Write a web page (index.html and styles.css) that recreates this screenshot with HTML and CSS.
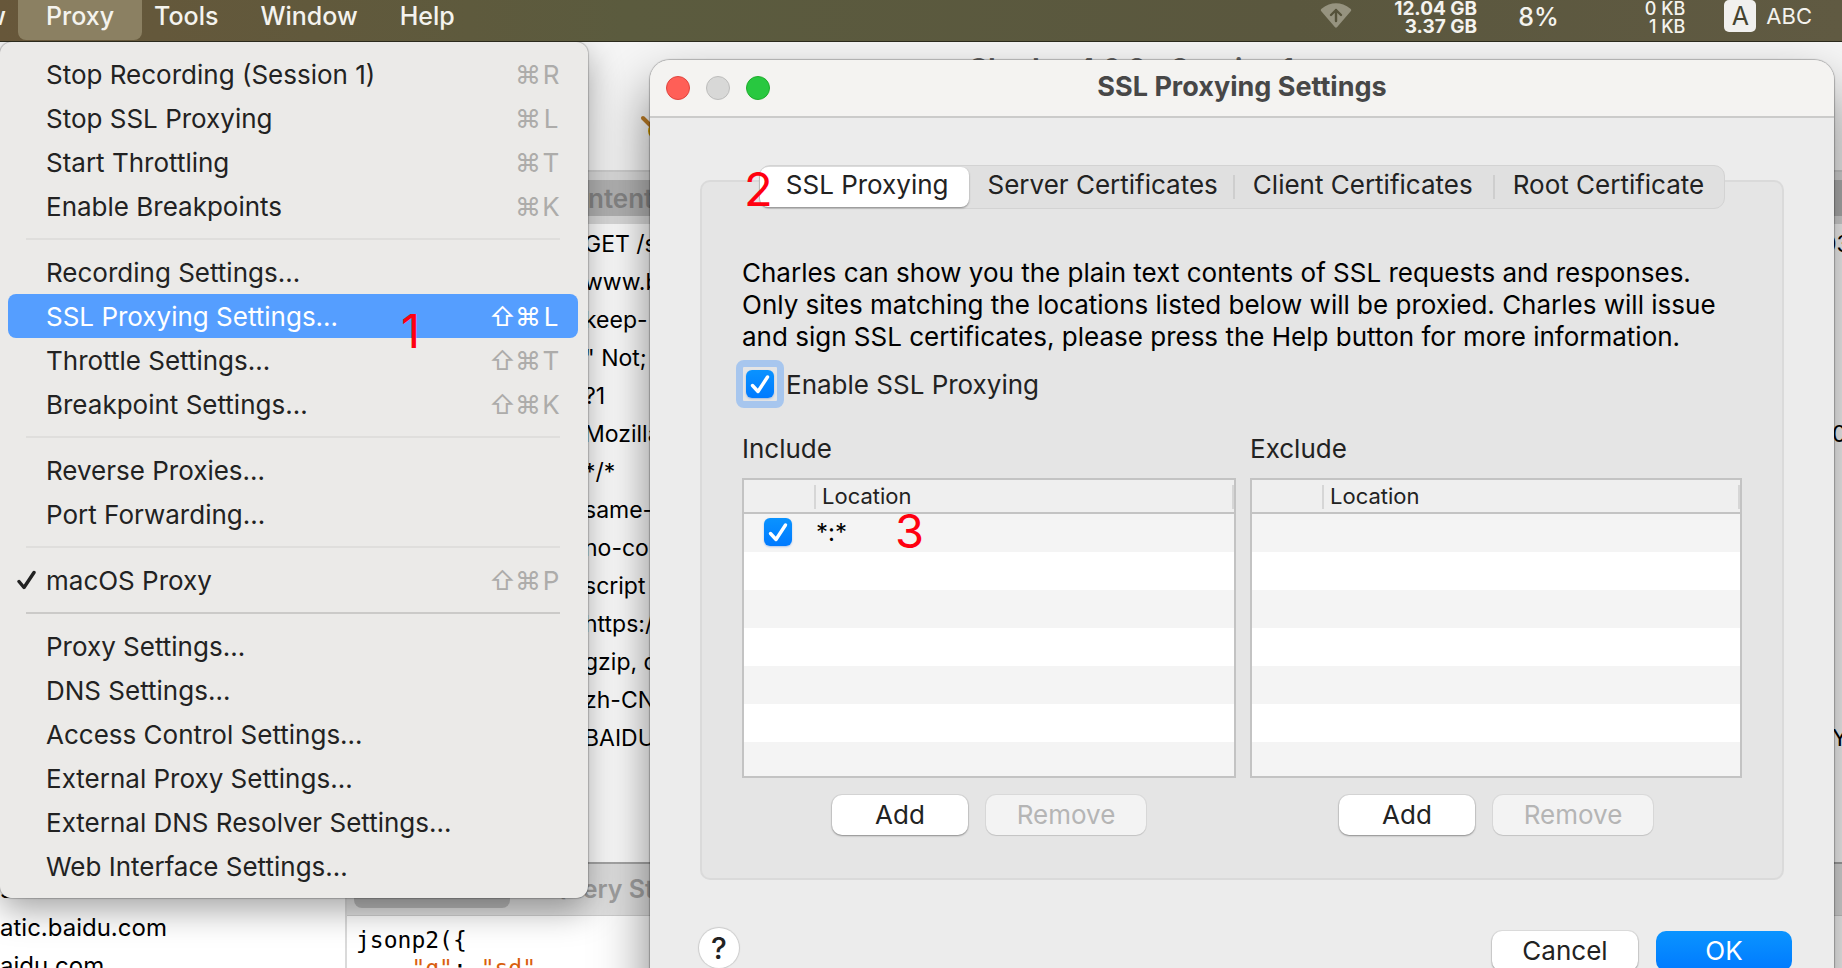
FILE: index.html
```html
<!DOCTYPE html>
<html lang="en">
<head>
<meta charset="utf-8">
<title>SSL Proxying Settings</title>
<link rel="stylesheet" href="styles.css">
</head>
<body>
<header class="menubar">
  <nav class="menubar-menus" aria-label="Application menus">
    <button class="menubar-item menubar-cut" type="button">View</button>
    <button class="menubar-item menubar-open" type="button">Proxy</button>
    <button class="menubar-item" type="button">Tools</button>
    <button class="menubar-item" type="button">Window</button>
    <button class="menubar-item" type="button">Help</button>
  </nav>
  <div class="status">
    <svg class="status-wifi" viewBox="0 0 32 26" aria-hidden="true">
      <path d="M1.500 8.500 Q0 7 1.500 5.700 Q16-5 30.500 5.700 Q32 7 30.500 8.500 L17.200 24 Q16 25.300 14.800 24Z" fill="#96937f"/>
      <path d="M16 18V7M11 12L16 7L21 12" fill="none" stroke="#55523a" stroke-width="2.400" stroke-linecap="round" stroke-linejoin="round"/>
    </svg>
    <div class="status-pair status-bold"><span>12.04 GB</span><span>3.37 GB</span></div>
    <span class="status-cpu">8%</span>
    <div class="status-pair status-net"><span>0 KB</span><span>1 KB</span></div>
    <span class="status-badge">A</span>
    <span class="status-input">ABC</span>
  </div>
</header>

<main class="desktop">
  <section class="app" aria-label="Charles">
    <h1 class="app-title">Charles 4.6.2 - Session 1</h1>
    <div class="app-body">
      <ul class="hosts">
        <li>ss.com</li>
        <li>atic.baidu.com</li>
        <li>aidu.com</li>
      </ul>
      <div class="detail">
        <div class="detail-tabs"><span class="detail-on">Contents</span></div>
        <dl class="fields">
          <div><dt>GET /s</dt><dd class="fields-wide">03</dd></div>
          <div><dt>www.b</dt></div>
          <div><dt>keep-</dt></div>
          <div><dt>" Not;</dt></div>
          <div><dt>?1</dt></div>
          <div><dt>Mozilla</dt><dd>0</dd></div>
          <div><dt>*/*</dt></div>
          <div><dt>same-</dt></div>
          <div><dt>no-co</dt></div>
          <div><dt>script</dt></div>
          <div><dt>https:/</dt></div>
          <div><dt>gzip, d</dt></div>
          <div><dt>zh-CN</dt></div>
          <div><dt>BAIDU</dt><dd>Y</dd></div>
        </dl>
        <div class="lower-tabs"><span class="lower-on"></span><span class="lower-off">Query String</span></div>
        <pre class="code">jsonp2({
    <span class="code-str">"q"</span>: <span class="code-str">"sd"</span></pre>
      </div>
    </div>
    <svg class="app-tool" viewBox="0 0 30 40" aria-hidden="true">
      <circle cx="17" cy="17" r="9" fill="#d7a000"/>
      <path d="M3 4L14 15" stroke="#b97a25" stroke-width="4" stroke-linecap="round"/>
    </svg>
  </section>

  <section class="dialog" role="dialog" aria-labelledby="dialog-title">
    <header class="titlebar">
      <div class="lights">
        <button class="light light-close" type="button" aria-label="Close"></button>
        <button class="light" type="button" aria-label="Minimize" disabled></button>
        <button class="light light-zoom" type="button" aria-label="Zoom"></button>
      </div>
      <h2 class="dialog-title" id="dialog-title">SSL Proxying Settings</h2>
    </header>
    <div class="dialog-body">
      <div class="tabs" role="tablist">
        <button class="tab tab-on" type="button" role="tab" aria-selected="true">SSL Proxying</button>
        <button class="tab tab-after" type="button" role="tab">Server Certificates</button>
        <button class="tab tab-line" type="button" role="tab">Client Certificates</button>
        <button class="tab tab-line" type="button" role="tab">Root Certificate</button>
      </div>
      <div class="panel" role="tabpanel">
        <p class="intro">Charles can show you the plain text contents of SSL requests and responses.<br>Only sites matching the locations listed below will be proxied. Charles will issue<br>and sign SSL certificates, please press the Help button for more information.</p>
        <label class="enable"><span class="focus"><input class="tick" type="checkbox" checked></span>Enable SSL Proxying</label>
        <div class="lists">
          <section class="list">
            <h3 class="list-title">Include</h3>
            <table class="grid">
              <thead><tr><th class="grid-check"></th><th class="grid-location">Location</th></tr></thead>
              <tbody>
                <tr><td class="grid-check"><input class="tick" type="checkbox" aria-label="Enable *:*" checked></td><td class="grid-value">*:*</td></tr>
                <tr><td></td><td></td></tr>
                <tr><td></td><td></td></tr>
                <tr><td></td><td></td></tr>
                <tr><td></td><td></td></tr>
                <tr><td></td><td></td></tr>
                <tr class="grid-last"><td></td><td></td></tr>
              </tbody>
            </table>
            <div class="list-actions">
              <button class="btn btn-add" type="button">Add</button>
              <button class="btn btn-remove" type="button" disabled>Remove</button>
            </div>
          </section>
          <section class="list">
            <h3 class="list-title">Exclude</h3>
            <table class="grid">
              <thead><tr><th class="grid-check"></th><th class="grid-location">Location</th></tr></thead>
              <tbody>
                <tr><td></td><td></td></tr>
                <tr><td></td><td></td></tr>
                <tr><td></td><td></td></tr>
                <tr><td></td><td></td></tr>
                <tr><td></td><td></td></tr>
                <tr><td></td><td></td></tr>
                <tr class="grid-last"><td></td><td></td></tr>
              </tbody>
            </table>
            <div class="list-actions">
              <button class="btn btn-add" type="button">Add</button>
              <button class="btn btn-remove" type="button" disabled>Remove</button>
            </div>
          </section>
        </div>
      </div>
      <footer class="dialog-footer">
        <button class="help" type="button" aria-label="Help">?</button>
        <div class="footer-actions">
          <button class="btn btn-cancel" type="button">Cancel</button>
          <button class="btn btn-ok" type="button">OK</button>
        </div>
      </footer>
    </div>
  </section>

  <div class="menu" role="menu" aria-label="Proxy">
    <button class="item" role="menuitem" type="button">Stop Recording (Session 1)<span class="keys"><kbd>⌘</kbd><kbd>R</kbd></span></button>
    <button class="item" role="menuitem" type="button">Stop SSL Proxying<span class="keys"><kbd>⌘</kbd><kbd>L</kbd></span></button>
    <button class="item" role="menuitem" type="button">Start Throttling<span class="keys"><kbd>⌘</kbd><kbd>T</kbd></span></button>
    <button class="item" role="menuitem" type="button">Enable Breakpoints<span class="keys"><kbd>⌘</kbd><kbd>K</kbd></span></button>
    <hr class="sep">
    <button class="item" role="menuitem" type="button">Recording Settings…</button>
    <button class="item item-on" role="menuitem" type="button">SSL Proxying Settings…<span class="keys"><kbd>⇧</kbd><kbd>⌘</kbd><kbd>L</kbd></span></button>
    <button class="item" role="menuitem" type="button">Throttle Settings…<span class="keys"><kbd>⇧</kbd><kbd>⌘</kbd><kbd>T</kbd></span></button>
    <button class="item" role="menuitem" type="button">Breakpoint Settings…<span class="keys"><kbd>⇧</kbd><kbd>⌘</kbd><kbd>K</kbd></span></button>
    <hr class="sep">
    <button class="item" role="menuitem" type="button">Reverse Proxies…</button>
    <button class="item" role="menuitem" type="button">Port Forwarding…</button>
    <hr class="sep">
    <button class="item item-checked" role="menuitemcheckbox" aria-checked="true" type="button"><svg class="item-tick" viewBox="0 0 20 20" aria-hidden="true"><path d="M3 11.500L8 17.500L18 2.500" fill="none" stroke="#222" stroke-width="3.400" stroke-linecap="round" stroke-linejoin="round"/></svg>macOS Proxy<span class="keys"><kbd>⇧</kbd><kbd>⌘</kbd><kbd>P</kbd></span></button>
    <hr class="sep sep-strong">
    <button class="item" role="menuitem" type="button">Proxy Settings…</button>
    <button class="item" role="menuitem" type="button">DNS Settings…</button>
    <button class="item" role="menuitem" type="button">Access Control Settings…</button>
    <button class="item" role="menuitem" type="button">External Proxy Settings…</button>
    <button class="item" role="menuitem" type="button">External DNS Resolver Settings…</button>
    <button class="item" role="menuitem" type="button">Web Interface Settings…</button>
  </div>

  <span class="mark mark-1">1</span>
  <span class="mark mark-2">2</span>
  <span class="mark mark-3">3</span>
</main>
</body>
</html>
```
FILE: styles.css
```css
* { box-sizing: border-box; }

html, body { height: 100%; }

body {
  margin: 0;
  display: flex;
  flex-direction: column;
  overflow: hidden;
  font-family: Inter, "Liberation Sans", sans-serif;
  font-size: 26px;
  color: #222;
}

button {
  margin: 0;
  padding: 0;
  border: 0;
  background: none;
  font: inherit;
  color: inherit;
}

h1, h2, h3, p, ul, dl, dd, pre { margin: 0; padding: 0; }

/* System menu bar */
.menubar {
  flex: none;
  height: 42px;
  display: flex;
  justify-content: space-between;
  background: linear-gradient(90deg, #67573a, #5b5b3e 34%, #5a573e 70%, #605a42);
  border-bottom: 1px solid #2b2a1c;
  color: #f4f3ee;
  font-size: 25px;
  overflow: hidden;
}
.menubar-menus { display: flex; font-weight: 500; text-shadow: 0 2px 4px rgba(0, 0, 0, .3); }
.menubar-item { height: 40px; padding: 0 21px 8px; border-radius: 0 0 8px 8px; white-space: nowrap; }
.menubar-cut { width: 18px; padding: 0 12px 8px 0; display: flex; justify-content: flex-end; align-items: center; }
.menubar-open { background: #8b8062; padding: 0 28px 8px; margin-right: -9px; }

.status { display: flex; align-items: flex-start; padding-right: 30px; }
.status-wifi { width: 32px; height: 26px; margin: 3px 42px 0 0; }
.status-pair {
  display: flex;
  flex-direction: column;
  align-items: flex-end;
  font-size: 18px;
  line-height: 18px;
}
.status-bold { font-size: 19px; font-weight: 700; margin-right: 41px; }
.status-cpu { font-weight: 500; line-height: 34px; margin-right: 86px; }
.status-net { font-weight: 500; margin-right: 39px; }
.status-badge {
  width: 32px;
  height: 32px;
  margin-right: 10px;
  border-radius: 5px;
  background: #f1f0ee;
  color: #45432f;
  line-height: 33px;
  text-align: center;
}
.status-input { font-size: 22px; line-height: 32px; }

.desktop { position: relative; flex: 1; overflow: hidden; }

/* Window at the back */
.app {
  height: 100%;
  display: flex;
  flex-direction: column;
  background: #f6f6f6;
  color: #000;
  font-size: 23px;
}
.app-title {
  flex: none;
  height: 128px;
  padding-top: 11px;
  font-size: 27px;
  line-height: 32px;
  text-align: center;
  color: #666;
  padding-left: 420px;
}
.app-body { flex: 1; display: flex; border-top: 2px solid #cfcfcf; min-height: 0; }
.hosts {
  width: 345px;
  padding-top: 699px;
  list-style: none;
  background: #fff;
  font-size: 24px;
  white-space: nowrap;
}
.hosts li { height: 38px; line-height: 38px; }
.detail {
  flex: 1;
  min-width: 0;
  background: #fff;
  border-left: 2px solid #dadada;
  display: flex;
  flex-direction: column;
}
.detail > * { flex: none; }
.detail-tabs { height: 52px; padding: 8px 0; background: #dcdcdc; font-weight: 600; font-size: 26px; }
.detail-on { display: block; padding-left: 206px; line-height: 38px; height: 36px; background: #b4b4b4; color: #878787; }
.fields { padding: 1px 0 0 237px; height: 638px; }
.fields div { display: flex; justify-content: space-between; height: 38px; line-height: 38px; white-space: nowrap; }
.fields dd { width: 10px; }
.fields .fields-wide { width: 20px; }
.lower-tabs {
  display: flex;
  height: 54px;
  padding: 8px 7px;
  background: #e2e2e2;
  border-top: 2px solid #a8a8a8;
  border-bottom: 1px solid #cfcfcf;
  font-weight: 600;
  font-size: 25px;
  line-height: 34px;
}
.lower-on { width: 156px; height: 36px; border-radius: 8px; background: #b8b8b8; }
.lower-off { margin-left: 38px; color: #a2a2a2; }
.code { padding: 10px 9px; font: 23px/28px "DejaVu Sans Mono", monospace; }
.code-str { color: #d95f0e; }
.app-tool { position: absolute; left: 640px; top: 72px; width: 30px; height: 40px; }

/* Settings dialog */
.dialog {
  position: absolute;
  left: 650px;
  right: 8px;
  top: 18px;
  border-radius: 20px;
  background: #ececec;
  box-shadow: 0 0 1px 1px rgba(0, 0, 0, .25), 0 28px 54px rgba(0, 0, 0, .5);
}
.titlebar {
  display: grid;
  grid-template-columns: 1fr auto 1fr;
  align-items: center;
  height: 58px;
  padding: 0 16px;
  border-radius: 20px 20px 0 0;
  background: #f4f3f1;
  border-bottom: 2px solid #cbcbca;
}
.lights { display: flex; gap: 16px; }
.light { width: 24px; height: 24px; border-radius: 50%; border: 1px solid #bdbdbc; background: #d8d8d7; }
.light-close { background: #ff5f57; border-color: #e0443e; }
.light-zoom { background: #28c840; border-color: #1dad2b; }
.dialog-title { font-size: 27px; font-weight: 700; line-height: 32px; padding-bottom: 2px; color: #474747; }
.dialog-body { padding: 47px 50px 0; }

.tabs {
  position: relative;
  width: max-content;
  height: 44px;
  margin: 0 auto;
  display: flex;
  border: 1px solid #d3d3d3;
  border-radius: 11px;
  background: #e0e0e0;
}
.tab { padding: 0 20px 6px; white-space: nowrap; }
.tab-on {
  margin: 1px 0;
  height: 40px;
  padding: 0 20px 5px 26px;
  border-radius: 8px;
  background: #fff;
  box-shadow: 0 1px 2px rgba(0, 0, 0, .4);
}
.tab-after { padding: 0 15px 6px 19px; }
.tab-line { background: linear-gradient(#cecece, #cecece) 0 50% / 2px 24px no-repeat; }

.panel {
  margin-top: -29px;
  padding: 75px 40px 43px;
  border: 2px solid #dadada;
  border-radius: 10px;
  background: #e5e5e5;
}
.intro { line-height: 32px; color: #000; white-space: nowrap; }
.enable { display: flex; align-items: center; height: 28px; margin: 17px 0 36px; }
.focus {
  width: 48px;
  height: 48px;
  margin: 0 2px 0 -6px;
  padding: 3px;
  border: 7px solid #a7c6ee;
  border-radius: 8px;
  line-height: 0;
}

.tick {
  appearance: none;
  width: 28px;
  height: 28px;
  margin: 0;
  border-radius: 6px;
  background: url("data:image/svg+xml,%3Csvg xmlns='http://www.w3.org/2000/svg' viewBox='0 0 28 28'%3E%3Cpath d='M6.500 15.500L12 21.500L21.500 7' fill='none' stroke='white' stroke-width='3.400' stroke-linecap='round' stroke-linejoin='round'/%3E%3C/svg%3E"), linear-gradient(#0a93ff, #007aff);
  box-shadow: 0 1px 2px rgba(0, 90, 220, .3);
}

.lists { display: grid; grid-template-columns: 494fr 492fr; gap: 14px; }
.list-title { font-size: 26px; font-weight: 400; line-height: 30px; margin-bottom: 14px; }
.grid {
  width: 100%;
  table-layout: fixed;
  border: 2px solid #c3c3c3;
  border-spacing: 0;
  background: #fff;
}
.grid th { height: 34px; padding: 0; background-color: #efefef; border-bottom: 2px solid #c3c3c3; }
.grid td { height: 38px; padding: 0; }
.grid tbody tr:nth-child(odd) { background: #f4f4f4; }
.grid .grid-last td { height: 34px; }
.grid-check { width: 70px; }
td.grid-check { padding: 0 0 2px 20px; line-height: 0; }
th.grid-location {
  padding-left: 8px;
  font-size: 22px;
  font-weight: 400;
  line-height: 28px;
  text-align: left;
  background-image: linear-gradient(#d6d6d6, #d6d6d6), linear-gradient(#d6d6d6, #d6d6d6);
  background-position: 0 5px, 100% 5px;
  background-size: 2px 24px;
  background-repeat: no-repeat;
}
.grid-value { color: #000; font-size: 24px; line-height: 28px; }
td.grid-value { padding-left: 2px; }

.list-actions { display: flex; justify-content: center; gap: 18px; margin-top: 17px; }
.btn {
  height: 40px;
  padding-bottom: 2px;
  border-radius: 10px;
  background: #fff;
  box-shadow: 0 0 0 1px rgba(0, 0, 0, .06), 0 1px 2px rgba(0, 0, 0, .35);
}
.btn-add { width: 136px; }
.btn-remove { width: 160px; background: #f3f3f3; color: #b5b5b5; box-shadow: 0 0 0 1px rgba(0, 0, 0, .05), 0 1px 1px rgba(0, 0, 0, .1); }
.btn-cancel { width: 146px; }
.btn-ok { width: 136px; background: linear-gradient(#0a94ff, #007aff); color: #fff; box-shadow: none; }

.dialog-footer { display: flex; justify-content: space-between; align-items: flex-start; margin: 0 -8px 0 -1px; padding: 48px 0 40px; }
.help { width: 40px; height: 40px; border-radius: 50%; background: #fff; font-size: 30px; font-weight: 500; box-shadow: 0 0 1px 1px rgba(0, 0, 0, .14); }
.footer-actions { display: flex; gap: 18px; padding-top: 3px; }

/* Open menu */
.menu {
  position: absolute;
  left: 0;
  top: 0;
  width: 588px;
  padding: 10px 10px;
  border-radius: 12px;
  padding-left: 8px;
  background: #ebeae8;
  box-shadow: 0 0 1px 1px rgba(0, 0, 0, .2), 0 12px 34px rgba(0, 0, 0, .36);
}
.item {
  display: flex;
  align-items: center;
  width: 100%;
  height: 44px;
  padding: 0 17px 0 38px;
  border-radius: 8px;
  text-align: left;
  white-space: nowrap;
}
.keys { margin-left: auto; display: flex; color: #adacaa; }
.keys kbd { width: 26px; font: inherit; text-align: center; }
.keys kbd:last-child { width: 20px; }
.item-on { background: #559eff; color: #fff; }
.item-on .keys { color: #fff; }
.item-checked { padding-left: 8px; }
.item-tick { width: 20px; height: 20px; margin-right: 10px; }
.sep { margin: 10px 18px; height: 2px; border: 0; background: #dfdedc; }
.sep-strong { background: #cbcac8; }

/* Step numbers */
.mark { position: absolute; font-size: 47px; line-height: 48px; font-weight: 400; color: #ff0010; }
.mark-1 { left: 401px; top: 265px; }
.mark-2 { left: 744px; top: 123px; }
.mark-3 { left: 895px; top: 465px; }
```
